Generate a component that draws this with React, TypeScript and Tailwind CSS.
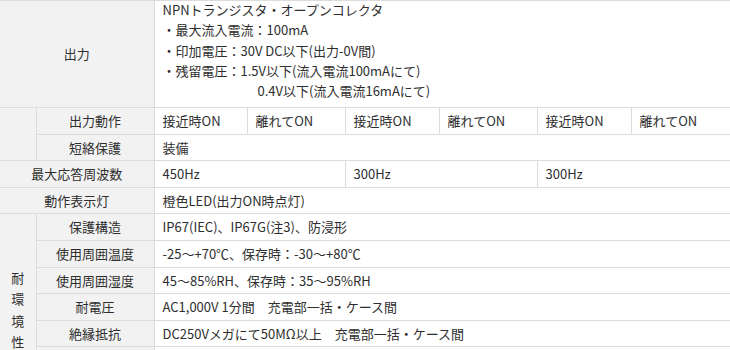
import React from "react";

const th =
  "border border-[#dcdcdc] bg-[#f2f2f2] text-center align-middle font-normal px-1 py-0";
const td = "border border-[#dcdcdc] bg-white text-left align-middle px-2 py-0 whitespace-nowrap";
const side = "border border-[#dcdcdc] border-l-0 bg-[#f2f2f2] p-0";
const row = "h-[26.6px]";

export default function App() {
  return (
    <div className="w-[730px] h-[350px] overflow-hidden bg-white">
      <table className="w-[730px] table-fixed border-collapse text-[13px] text-[#2e2e2e] font-['Noto_Sans_CJK_JP','Noto_Sans',sans-serif]">
        <colgroup>
          <col className="w-[36px]" />
          <col className="w-[118px]" />
          <col className="w-[93px]" />
          <col className="w-[98px]" />
          <col className="w-[94px]" />
          <col className="w-[98px]" />
          <col className="w-[94px]" />
          <col className="w-[99px]" />
        </colgroup>
        <tbody>
          <tr className="h-[107px]">
            <th colSpan={2} className={`${th} border-l-0`}>
              出力
            </th>
            <td colSpan={6} className="border border-[#dcdcdc] border-r-0 bg-white align-top px-2 pt-0 pb-0 leading-[20.3px] whitespace-nowrap">
              <div className="-mt-px">NPNトランジスタ・オープンコレクタ</div>
              <div>・最大流入電流：100mA</div>
              <div>・印加電圧：30V DC以下(出力-0V間)</div>
              <div>・残留電圧：1.5V以下(流入電流100mAにて)</div>
              <div className="pl-[95px]">0.4V以下(流入電流16mAにて)</div>
            </td>
          </tr>
          <tr className={row}>
            <td rowSpan={2} className={side}></td>
            <th className={th}>出力動作</th>
            <td className={td}>接近時ON</td>
            <td className={td}>離れてON</td>
            <td className={td}>接近時ON</td>
            <td className={td}>離れてON</td>
            <td className={td}>接近時ON</td>
            <td className={`${td} border-r-0`}>離れてON</td>
          </tr>
          <tr className={row}>
            <th className={th}>短絡保護</th>
            <td colSpan={6} className={`${td} border-r-0`}>
              装備
            </td>
          </tr>
          <tr className={row}>
            <th colSpan={2} className={`${th} border-l-0`}>
              最大応答周波数
            </th>
            <td colSpan={2} className={td}>
              450Hz
            </td>
            <td colSpan={2} className={td}>
              300Hz
            </td>
            <td colSpan={2} className={`${td} border-r-0`}>
              300Hz
            </td>
          </tr>
          <tr className={row}>
            <th colSpan={2} className={`${th} border-l-0`}>
              動作表示灯
            </th>
            <td colSpan={6} className={`${td} border-r-0`}>
              橙色LED(出力ON時点灯)
            </td>
          </tr>
          <tr className={row}>
            <td rowSpan={7} className={`${side} text-center align-middle`}>
              <div className="flex flex-col items-center pt-[6px] leading-[21.5px]">
                <span>耐</span>
                <span>環</span>
                <span>境</span>
                <span>性</span>
              </div>
            </td>
            <th className={th}>保護構造</th>
            <td colSpan={6} className={`${td} border-r-0`}>
              IP67(IEC)、IP67G(注3)、防浸形
            </td>
          </tr>
          <tr className={row}>
            <th className={th}>使用周囲温度</th>
            <td colSpan={6} className={`${td} border-r-0`}>
              -25～+70℃、保存時：-30～+80℃
            </td>
          </tr>
          <tr className={row}>
            <th className={th}>使用周囲湿度</th>
            <td colSpan={6} className={`${td} border-r-0`}>
              45～85%RH、保存時：35～95%RH
            </td>
          </tr>
          <tr className={row}>
            <th className={th}>耐電圧</th>
            <td colSpan={6} className={`${td} border-r-0`}>
              AC1,000V 1分間　充電部一括・ケース間
            </td>
          </tr>
          <tr className={row}>
            <th className={th}>絶縁抵抗</th>
            <td colSpan={6} className={`${td} border-r-0`}>
              DC250Vメガにて50MΩ以上　充電部一括・ケース間
            </td>
          </tr>
          <tr className={row}>
            <th className={th}>耐振動</th>
            <td colSpan={6} className={`${td} border-r-0`}>
              10～55Hz 複振幅1.5mm XYZ各方向2時間
            </td>
          </tr>
          <tr className={row}>
            <th className={th}>耐衝撃</th>
            <td colSpan={6} className={`${td} border-r-0`}>
              500m/s² XYZ各方向3回
            </td>
          </tr>
        </tbody>
      </table>
    </div>
  );
}
